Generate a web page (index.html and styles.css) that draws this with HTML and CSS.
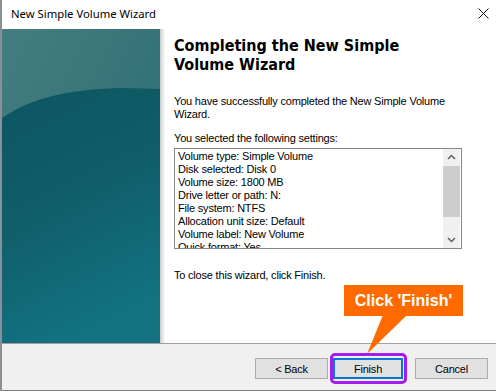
FILE: index.html
```html
<!DOCTYPE html>
<html>
<head>
<meta charset="utf-8">
<link rel="stylesheet" href="styles.css">
</head>
<body>
<div class="window">
  <div class="titlebar">
    <span class="title">New Simple Volume Wizard</span>
    <svg class="close" width="11" height="11" viewBox="0 0 11 11"><path d="M0.5 0.5 L10.5 10.5 M10.5 0.5 L0.5 10.5" stroke="#111" stroke-width="1" fill="none"/></svg>
  </div>
  <div class="main">
    <div class="banner">
      <svg class="banner-art" width="158" height="314" viewBox="0 0 158 314" preserveAspectRatio="none">
        <defs>
          <linearGradient id="top" x1="0" y1="0" x2="1" y2="1">
            <stop offset="0" stop-color="#437d80"/>
            <stop offset="1" stop-color="#2a6a70"/>
          </linearGradient>
          <linearGradient id="low" x1="0" y1="0" x2="0.3" y2="1">
            <stop offset="0" stop-color="#0c5560"/>
            <stop offset="0.5" stop-color="#0f5e69"/>
            <stop offset="1" stop-color="#137180"/>
          </linearGradient>
        </defs>
        <rect x="0" y="0" width="158" height="314" fill="url(#top)"/>
        <path d="M0 89 C30 68 70 60 120 59 L158 60 L158 314 L0 314 Z" fill="url(#low)"/>
      </svg>
    </div>
    <div class="shade"></div>
    <div class="content">
      <h1 class="heading">Completing the New Simple Volume Wizard</h1>
      <p class="para">You have successfully completed the New Simple Volume Wizard.</p>
      <p class="label">You selected the following settings:</p>
      <div class="listbox">
        <div class="list-lines">
          <div>Volume type: Simple Volume</div>
          <div>Disk selected: Disk 0</div>
          <div>Volume size: 1800 MB</div>
          <div>Drive letter or path: N:</div>
          <div>File system: NTFS</div>
          <div>Allocation unit size: Default</div>
          <div>Volume label: New Volume</div>
          <div>Quick format: Yes</div>
        </div>
        <div class="scrollbar">
          <svg class="arrow" width="17" height="17" viewBox="0 0 17 17"><path d="M5 10 L8.5 6.5 L12 10" stroke="#606060" stroke-width="1.5" fill="none"/></svg>
          <div class="track"><div class="thumb"></div></div>
          <svg class="arrow" width="17" height="17" viewBox="0 0 17 17"><path d="M5 7 L8.5 10.5 L12 7" stroke="#606060" stroke-width="1.5" fill="none"/></svg>
        </div>
      </div>
      <p class="closing">To close this wizard, click Finish.</p>
    </div>
  </div>
  <div class="footer">
    <button class="btn">&lt; Back</button>
    <div class="highlight"><button class="btn btn-primary">Finish</button></div>
    <button class="btn btn-cancel">Cancel</button>
  </div>
</div>
<div class="callout">Click 'Finish'</div>
<svg class="callout-tail" width="50" height="45" viewBox="0 0 50 45"><path d="M17 0 L41 0 L1 39 Z" fill="#ff6a00"/></svg>
</body>
</html>
```

FILE: styles.css
```css
html, body {
  margin: 0;
  padding: 0;
}
body {
  width: 496px;
  height: 391px;
  overflow: hidden;
  background: #ffffff;
  position: relative;
  font-family: "Liberation Sans", Arial, sans-serif;
  font-size: 11px;
  letter-spacing: -0.2px;
  color: #000;
}
.window {
  display: flex;
  flex-direction: column;
  height: 391px;
  border-left: 2px solid #8b9098;
  box-sizing: border-box;
}
.titlebar {
  height: 29px;
  flex: none;
  display: flex;
  align-items: center;
  justify-content: space-between;
  background: #fff;
  padding: 0 7px 0 9px;
  box-sizing: border-box;
}
.title {
  font-family: "Noto Sans", "Segoe UI", sans-serif;
  font-size: 11.3px;
  letter-spacing: 0;
  color: #000;
  position: relative;
  top: -1px;
}
.close {
  display: block;
  position: relative;
  top: -1px;
}
.main {
  display: flex;
  height: 314px;
  flex: none;
}
.banner {
  width: 158px;
  flex: none;
  height: 314px;
}
.banner-art {
  display: block;
}
.shade {
  width: 5px;
  flex: none;
  background: linear-gradient(to right, #c9c9c9, #e6e6e6 50%, #fbfbfb);
}
.content {
  flex: 1;
  padding: 7px 0 0 9px;
  display: flex;
  flex-direction: column;
}
.heading {
  margin: 0;
  font-family: "DejaVu Sans Condensed", "DejaVu Sans", sans-serif;
  font-weight: bold;
  font-size: 16px;
  letter-spacing: 0;
  line-height: 19px;
  width: 290px;
  color: #000;
}
.para {
  margin: 21px 0 0 0;
  line-height: 13px;
  width: 290px;
}
.label {
  margin: 11px 0 0 0;
  line-height: 13px;
}
.listbox {
  margin-top: 3px;
  width: 288px;
  height: 101px;
  box-sizing: border-box;
  border: 1px solid #828790;
  display: flex;
  overflow: hidden;
  background: #fff;
}
.list-lines {
  flex: 1;
  padding: 1px 0 0 3px;
  line-height: 13px;
  overflow: hidden;
}
.scrollbar {
  width: 17px;
  flex: none;
  background: #f0f0f0;
  display: flex;
  flex-direction: column;
  margin-right: 1px;
}
.arrow {
  display: block;
  flex: none;
}
.track {
  flex: 1;
  display: flex;
  flex-direction: column;
}
.thumb {
  height: 51px;
  background: #cdcdcd;
}
.closing {
  margin: 20px 0 0 0;
  line-height: 13px;
}
.footer {
  flex: 1;
  background: #f0f0f0;
  border-top: 1px solid #a0a0a0;
  border-bottom: 1px solid #7d7d7d;
  display: flex;
  align-items: center;
  justify-content: flex-end;
  padding: 3px 8px 0 0;
  box-sizing: border-box;
}
.btn {
  width: 73px;
  height: 21px;
  box-sizing: border-box;
  background: #e1e1e1;
  border: 1px solid #adadad;
  font-family: "Liberation Sans", Arial, sans-serif;
  font-size: 11px;
  letter-spacing: -0.2px;
  color: #000;
  padding: 0;
  margin: 0;
}
.highlight {
  margin-left: 2px;
  padding: 2px 1px 2px 0;
  border: 3px solid #a21cf0;
  border-radius: 5px;
  display: flex;
}
.btn-primary {
  width: 70px;
  border: 2px solid #0078d7;
}
.btn-cancel {
  margin-left: 8px;
}
.callout {
  position: absolute;
  left: 344px;
  top: 285px;
  width: 119px;
  height: 31px;
  background: #ff6a00;
  color: #fff;
  font-family: "Liberation Sans", Arial, sans-serif;
  font-weight: bold;
  font-size: 16px;
  letter-spacing: 0;
  line-height: 31px;
  text-align: center;
}
.callout-tail {
  position: absolute;
  left: 366px;
  top: 315px;
}
```
